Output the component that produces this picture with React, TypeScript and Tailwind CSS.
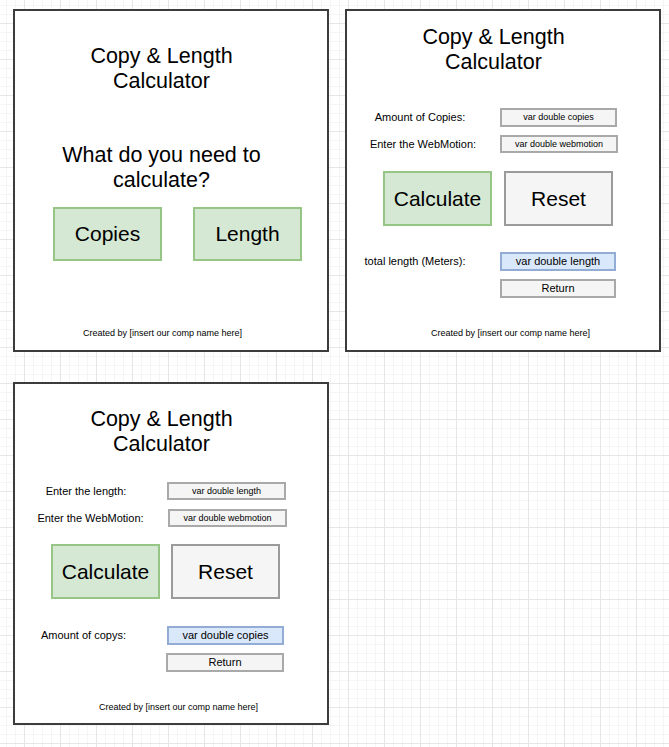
import type { ReactNode } from "react";

const FONT = "font-['Liberation_Sans',Arial,sans-serif]";

function Frame({ pos, children }: { pos: string; children: ReactNode }) {
  return (
    <div className={`absolute ${pos} w-[316px] h-[343px] bg-white border-2 border-[#3c3c3c] flex flex-col text-black`}>
      {children}
    </div>
  );
}

function Title({ className = "" }: { className?: string }) {
  return (
    <div className={`w-[293px] text-center text-[21.5px] leading-[25px] ${className}`}>
      Copy &amp; Length
      <br />
      Calculator
    </div>
  );
}

function Input({ className, tone = "gray", small, children }: { className: string; tone?: "gray" | "blue"; small?: boolean; children: ReactNode }) {
  const skin = tone === "blue" ? "bg-[#dae8fc] border-[#92acd6]" : "bg-[#f5f5f5] border-[#a9a9a9]";
  return (
    <div className={`flex items-center justify-center border-2 whitespace-nowrap ${small ? "text-[9px] pt-[1px]" : "text-[11px]"} ${skin} ${className}`}>
      {children}
    </div>
  );
}

function Row({ mt, labelW, label, children }: { mt: string; labelW: string; label: string; children: ReactNode }) {
  return (
    <div className={`flex items-center ${mt}`}>
      <div className={`${labelW} text-center text-[11px] whitespace-nowrap`}>{label}</div>
      {children}
    </div>
  );
}

function BigButton({ tone, className, children }: { tone: "green" | "gray"; className?: string; children: ReactNode }) {
  const skin = tone === "green" ? "bg-[#d5e8d4] border-[#97c585]" : "bg-[#f5f5f5] border-[#9b9b9b]";
  return (
    <div className={`w-[109px] flex items-center justify-center border-2 text-[21px] ${skin} ${className ?? ""}`}>
      {children}
    </div>
  );
}

function Footer({ className }: { className: string }) {
  return <div className={`text-[9px] leading-[11px] whitespace-nowrap ${className}`}>Created by [insert our comp name here]</div>;
}

export default function App() {
  return (
    <div
      className={`${FONT} relative w-[669px] h-[747px] overflow-hidden bg-white bg-[linear-gradient(to_right,#e6e6e6_1px,transparent_1px),linear-gradient(to_bottom,#e6e6e6_1px,transparent_1px),linear-gradient(to_right,#f5f5f5_1px,transparent_1px),linear-gradient(to_bottom,#f5f5f5_1px,transparent_1px)] bg-[size:36px_36px,36px_36px,9px_9px,9px_9px] bg-[position:24px_23px]`}
    >
      {/* start screen */}
      <Frame pos="left-[13px] top-[9px]">
        <Title className="mt-[33px]" />
        <div className="mt-[49px] w-[293px] text-center text-[21.5px] leading-[25px]">
          What do you need to
          <br />
          calculate?
        </div>
        <div className="mt-[14px] ml-[38px] flex gap-[31px] h-[54px]">
          <BigButton tone="green">Copies</BigButton>
          <BigButton tone="green">Length</BigButton>
        </div>
        <Footer className="mt-[67px] ml-[68px]" />
      </Frame>

      {/* copies -> length */}
      <Frame pos="left-[345px] top-[9px]">
        <Title className="mt-[14px]" />
        <Row mt="mt-[33px]" labelW="w-[146px]" label="Amount of Copies:">
          <Input small className="ml-[7px] w-[117px] h-[19px]">var double copies</Input>
        </Row>
        <Row mt="mt-[8px]" labelW="w-[152px]" label="Enter the WebMotion:">
          <Input small className="ml-[1px] w-[118px] h-[18px]">var double webmotion</Input>
        </Row>
        <div className="mt-[18px] ml-[36px] flex gap-[12px] h-[55px]">
          <BigButton tone="green">Calculate</BigButton>
          <BigButton tone="gray">Reset</BigButton>
        </div>
        <Row mt="mt-[26px]" labelW="w-[136px]" label="total length (Meters):">
          <Input tone="blue" className="ml-[17px] w-[116px] h-[19px]">var double length</Input>
        </Row>
        <Input className="mt-[8px] ml-[153px] w-[116px] h-[19px]">Return</Input>
        <Footer className="mt-[30px] ml-[84px]" />
      </Frame>

      {/* length -> copies */}
      <Frame pos="left-[13px] top-[382px]">
        <Title className="mt-[23px]" />
        <Row mt="mt-[25px]" labelW="w-[142px]" label="Enter the length:">
          <Input small className="ml-[10px] w-[119px] h-[18px]">var double length</Input>
        </Row>
        <Row mt="mt-[9px]" labelW="w-[151px]" label="Enter the WebMotion:">
          <Input small className="ml-[2px] w-[119px] h-[18px]">var double webmotion</Input>
        </Row>
        <div className="mt-[17px] ml-[36px] flex gap-[11px] h-[55px]">
          <BigButton tone="green">Calculate</BigButton>
          <BigButton tone="gray">Reset</BigButton>
        </div>
        <Row mt="mt-[27px]" labelW="w-[137px]" label="Amount of copys:">
          <Input tone="blue" className="ml-[15px] w-[117px] h-[19px]">var double copies</Input>
        </Row>
        <Input className="mt-[8px] ml-[151px] w-[118px] h-[19px]">Return</Input>
        <Footer className="mt-[30px] ml-[84px]" />
      </Frame>
    </div>
  );
}
